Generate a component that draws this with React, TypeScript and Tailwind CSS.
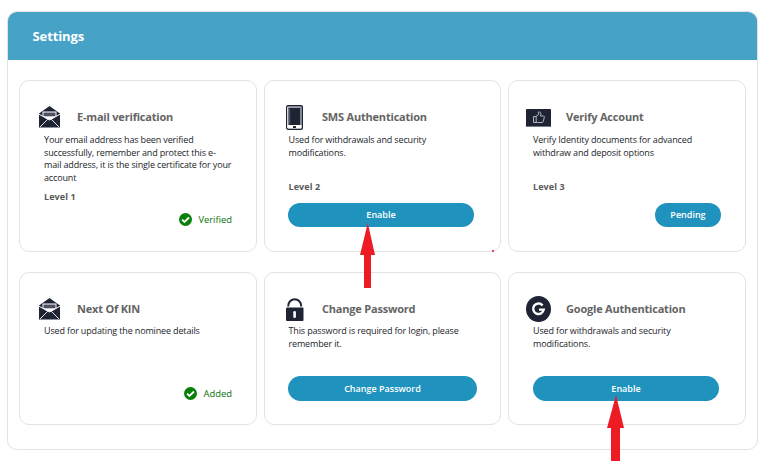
import type { ReactNode } from "react";

const font = "font-['Open_Sans','Noto_Sans',sans-serif]";

function EnvelopeIcon() {
  return (
    <svg width="21" height="22" viewBox="0 0 21 22" className="ml-[2px] block">
      <path d="M0 7.5 10.5 0 21 7.5V21.5H0Z" fill="#1f2435" />
      <path d="M3.5 5.5H17.5V10L12.5 13.4H8.5L3.5 10Z" fill="#fff" />
      <rect x="4.5" y="6.5" width="12" height="3.8" fill="#4c5064" />
      <path d="M0 8.2 10.5 14 21 8.2" fill="none" stroke="#fff" strokeWidth="1" />
      <path d="M1 21 8.5 13.5H12.5L20 21" fill="none" stroke="#e4e5ea" strokeWidth="1" />
    </svg>
  );
}

function PhoneIcon() {
  return (
    <svg width="17" height="25" viewBox="0 0 17 25" className="ml-1 block">
      <rect x="0.6" y="0.6" width="15.8" height="23.8" rx="1.8" fill="#a2a4b3" stroke="#1f2435" strokeWidth="1.3" />
      <rect x="1.5" y="20" width="14" height="3.4" fill="#fff" />
      <path d="M1.7 2V23" stroke="#fff" strokeWidth="0.8" />
      <rect x="2.6" y="3" width="11.6" height="17" fill="#1f2435" />
      <path d="M3.7 4V19" stroke="#777b8e" strokeWidth="0.7" />
      <rect x="7" y="21" width="3" height="2" rx="0.6" fill="#1f2435" />
    </svg>
  );
}

function ThumbIcon() {
  return (
    <svg width="25" height="18" viewBox="0 0 25 18" className="mt-[2px] block">
      <rect width="25" height="18" rx="0.8" fill="#1f2435" />
      <path d="M0.5 17.5H24.5" stroke="#777b8b" strokeWidth="1" />
      <path
        d="M10 7.4 12.4 5.8V3.4Q12.4 2.8 13.2 2.8Q14.9 3 14.9 5.2L14.5 7H17.6Q18.6 7.1 18.3 8.3L17.2 12.5Q17 13.5 16 13.5H11.3L10 12.8M7.5 7.5H10.2V13.5H7.5Z"
        fill="none" stroke="#c3c5ce" strokeWidth="0.9" strokeLinejoin="round"
      />
    </svg>
  );
}

function LockIcon() {
  return (
    <svg width="18" height="23" viewBox="0 0 18 23" className="ml-1 block">
      <path d="M2.2 8.5C2.2-1.2 15.2-1.2 15.2 8.5" fill="none" stroke="#1f2435" strokeWidth="2" />
      <rect x="0" y="9.5" width="17.5" height="13.5" rx="1" fill="#1f2435" />
      <rect x="7.3" y="13" width="2.6" height="7" rx="1.2" fill="#fff" />
    </svg>
  );
}

function GoogleIcon() {
  return (
    <svg width="25" height="26" viewBox="0 0 25 26" className="block">
      <ellipse cx="12.5" cy="13" rx="12.5" ry="13" fill="#1f2435" />
      <path d="M16.6 9.4A5.3 5.3 0 1 0 17.7 13.6H13" fill="none" stroke="#fff" strokeWidth="2.4" />
    </svg>
  );
}

function CheckIcon() {
  return (
    <svg width="13" height="13" viewBox="0 0 13 13" className="block">
      <circle cx="6.5" cy="6.5" r="6.5" fill="#078007" />
      <path d="m3.1 6.7 2.3 2.3 4.6-4.5" fill="none" stroke="#fff" strokeWidth="1.8" />
    </svg>
  );
}

type CardProps = { icon: ReactNode; title: string; text: string; textClass?: string; children?: ReactNode };

function Card({ icon, title, text, textClass = "mt-[3.3px] pl-px", children }: CardProps) {
  return (
    <section className="flex flex-col rounded-[10px] border border-[#e2e2e2] bg-white pt-[22px] pl-[23px]">
      <header className="-ml-[6px] flex h-7 items-center">
        <div className="flex w-10 shrink-0 items-center">{icon}</div>
        <h2 className="whitespace-nowrap text-[11px] leading-[16px] font-bold tracking-[-0.2px] text-[#646464]">{title}</h2>
      </header>
      <p className={`whitespace-pre text-[9px] leading-[12.4px] tracking-[-0.15px] text-[#212529] ${textClass}`}>{text}</p>
      {children}
    </section>
  );
}

function Level({ children, className }: { children: ReactNode; className: string }) {
  return <p className={`text-[9px] leading-[12px] font-bold tracking-[0.1px] text-[#5a5a5a] ${className}`}>{children}</p>;
}

function Status({ children, className }: { children: ReactNode; className: string }) {
  return (
    <div className={`flex items-center justify-end pr-[24px] text-[9.4px] leading-[13px] text-[#0a700a] ${className}`}>
      <CheckIcon />
      <span className="ml-[6.3px]">{children}</span>
    </div>
  );
}

function Button({ children, className }: { children: ReactNode; className: string }) {
  return (
    <button className={`flex shrink-0 items-center justify-center rounded-full bg-[#1f93bd] text-[9px] font-semibold text-white ${className}`}>
      {children}
    </button>
  );
}

export default function App() {
  return (
    <div className={`relative h-[464px] w-[773px] overflow-hidden bg-white pt-[11px] pl-[7px] ${font}`}>
      <main className="h-[439px] w-[751px] overflow-hidden rounded-[10px] border border-[#e2e2e2]">
        <header className="flex h-12 items-center bg-[#46a2c6] pt-[2px] pl-[24.5px]">
          <h1 className="text-[13px] font-bold tracking-[-0.1px] text-white">Settings</h1>
        </header>
        <div className="grid grid-cols-[238px_237px_238px] grid-rows-[172px_153px] gap-x-[7px] gap-y-5 pt-5 pl-[11px]">
          <Card
            icon={<EnvelopeIcon />}
            title="E-mail verification"
            text={"Your email address has been verified\nsuccessfully, remember and protect this e-\nmail address, it is the single certificate for your\naccount"}
          >
            <Level className="mt-[7px] pl-px">Level 1</Level>
            <Status className="mt-[10.5px]">Verified</Status>
          </Card>
          <Card
            icon={<PhoneIcon />}
            title="SMS Authentication"
            text={"Used for withdrawals and security\nmodifications."}
            textClass="mt-[3.3px] pl-[0.5px]"
          >
            <Level className="mt-[21.7px] pl-[0.5px]">Level 2</Level>
            <Button className="mt-[10.2px] h-6 w-[186px]">Enable</Button>
          </Card>
          <Card icon={<ThumbIcon />} title="Verify Account" text={"Verify Identity documents for advanced\nwithdraw and deposit options"}>
            <Level className="mt-[21.7px] pl-px">Level 3</Level>
            <Button className="mt-[10.2px] ml-[123px] h-6 w-[66px]">Pending</Button>
          </Card>
          <Card icon={<EnvelopeIcon />} title="Next Of KIN" text="Used for updating the nominee details" textClass="mt-[2.3px] pl-px">
            <Status className="mt-[49.3px]">Added</Status>
          </Card>
          <Card
            icon={<LockIcon />}
            title="Change Password"
            text={"This password is required for login, please\nremember it."}
            textClass="mt-[2.3px] pl-[0.5px]"
          >
            <Button className="mt-[25.9px] h-[25px] w-[189px]">Change Password</Button>
          </Card>
          <Card
            icon={<GoogleIcon />}
            title="Google Authentication"
            text={"Used for withdrawals and security\nmodifications."}
            textClass="mt-[2.3px] pl-px"
          >
            <Button className="mt-[25.9px] ml-px h-[25px] w-[186px]">Enable</Button>
          </Card>
        </div>
      </main>

      {/* Red pointers drawn over the two enable buttons */}
      <svg className="absolute top-[223px] left-[360px]" width="15" height="65" viewBox="0 0 15 65">
        <path d="M7.8 0 15 32H11V65H4V32H0Z" fill="#ed1c24" />
      </svg>
      <svg className="absolute top-[395px] left-[607px]" width="17" height="66" viewBox="0 0 17 66">
        <path d="M9 0 17 33H13V66H4V33H0Z" fill="#ed1c24" />
      </svg>
      <span className="absolute top-[250px] left-[492px] size-[2px] bg-[#e0525a]" />
    </div>
  );
}
